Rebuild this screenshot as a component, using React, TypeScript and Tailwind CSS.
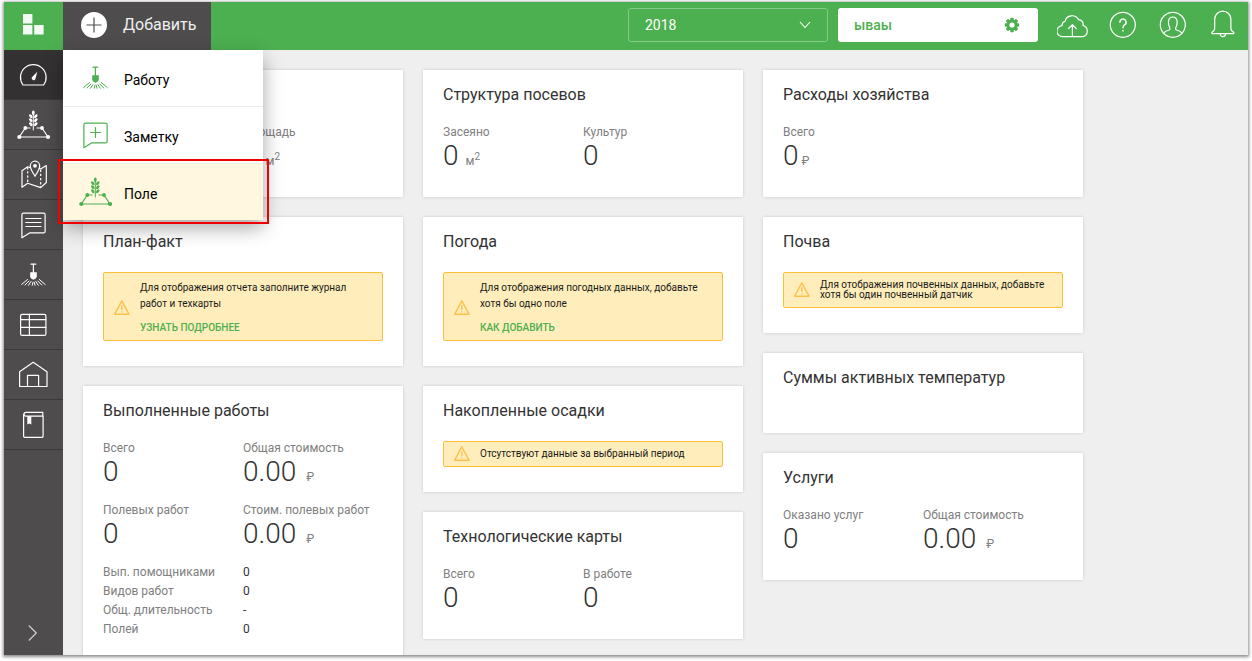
import type { ReactNode } from 'react';

function LineIcon({ children }: { children: ReactNode }) {
  return (
    <svg
      width="33"
      height="32"
      viewBox="0 0 33 32"
      fill="none"
      stroke="currentColor"
      strokeWidth="1.2"
      strokeLinejoin="round"
      strokeLinecap="round"
      className="shrink-0"
      aria-hidden="true"
    >
      {children}
    </svg>
  );
}

const GaugeIcon = () => (
  <LineIcon>
    <path d="M6 26A12.8 12.8 0 1 1 26.6 26Z" />
    <path d="M20.3 12.7L18.3 20.2A2 2 0 0 1 14.7 18.6Z" fill="currentColor" stroke="none" />
  </LineIcon>
);

const FieldIcon = () => (
  <LineIcon>
    <path d="M13 19H8.3L2.3 28H31L25 19H20" />
    <path d="M16.3 6V21" strokeWidth="1" />
    <g fill="currentColor" stroke="none">
      <circle cx="2.3" cy="28" r="2.1" />
      <circle cx="31" cy="28" r="2.1" />
      <circle cx="8.3" cy="19" r="1.9" />
      <circle cx="25" cy="19" r="1.9" />
      <ellipse cx="16.3" cy="3.8" rx="1.4" ry="2.4" />
      <ellipse cx="13.8" cy="7.2" rx="1.3" ry="2.3" transform="rotate(-40 13.8 7.2)" />
      <ellipse cx="18.8" cy="7.2" rx="1.3" ry="2.3" transform="rotate(40 18.8 7.2)" />
      <ellipse cx="13.8" cy="11.2" rx="1.3" ry="2.3" transform="rotate(-40 13.8 11.2)" />
      <ellipse cx="18.8" cy="11.2" rx="1.3" ry="2.3" transform="rotate(40 18.8 11.2)" />
      <ellipse cx="13.8" cy="15.2" rx="1.3" ry="2.3" transform="rotate(-40 13.8 15.2)" />
      <ellipse cx="18.8" cy="15.2" rx="1.3" ry="2.3" transform="rotate(40 18.8 15.2)" />
    </g>
  </LineIcon>
);

const MapIcon = () => (
  <LineIcon>
    <path d="M13.3 8.8L10.7 7.8L5 11.7V28.3L10.7 24.3L23.7 28.6L29.3 23.5V6.6L23.7 10L22.3 9.5" />
    <path d="M10.7 8V24M23.7 10.5V28" strokeDasharray="2.4 1.8" strokeLinecap="butt" />
    <path d="M18 17.3C16 13.6 13.3 10.4 13.3 6.9A4.7 4.7 0 0 1 22.7 6.9C22.7 10.4 20 13.6 18 17.3Z" />
    <circle cx="18" cy="6.8" r="1.9" fill="currentColor" stroke="none" />
  </LineIcon>
);

const bubble =
  'M6.4 4.2H26.6A1.5 1.5 0 0 1 28.1 5.7V22.4A1.5 1.5 0 0 1 26.6 23.9H12.5L4.9 28.7V5.7A1.5 1.5 0 0 1 6.4 4.2Z';

const ChatIcon = () => (
  <LineIcon>
    <path d={bubble} />
    <path d="M8.8 9.5H24M8.8 13.5H24M8.8 17.5H24" />
  </LineIcon>
);

const NoteIcon = () => (
  <LineIcon>
    <path d={bubble} />
    <path d="M16.5 8.5V18.5M11.5 13.5H21.5" />
  </LineIcon>
);

const ShovelIcon = () => (
  <LineIcon>
    <path d="M14 5.2H18.8M16.4 5.2V14" />
    <path d="M13.2 13.2H19.8V17.7Q19.4 19.8 16.4 20.8Q13.4 19.8 13.2 17.7Z" fill="currentColor" stroke="none" />
    <path
      d="M10.5 20.5L4.6 25.5M12 22L8 26M14 22.5L11.5 26.3M16 23.2L15.2 26.3M22.3 20.5L28.2 25.5M20.8 22L24.8 26M18.8 22.5L21.3 26.3M17.2 23.2L18 26.3"
      strokeWidth="1"
    />
  </LineIcon>
);

const TableIcon = () => (
  <LineIcon>
    <rect x="3.6" y="5.4" width="25.3" height="21" rx="1.5" />
    <path d="M3.6 10.6H28.9M3.6 18.4H28.9M12.4 5.4V26.4" />
  </LineIcon>
);

const HouseIcon = () => (
  <LineIcon>
    <path d="M2.6 12.8L16.2 3.3L30 12.8V27.5H2.6ZM10.5 27.5V16.3H21.6V27.5" />
  </LineIcon>
);

const BookIcon = () => (
  <LineIcon>
    <path d="M25.8 3.3H8.6A2 2 0 0 0 8.6 7.2H26.1V27A1.4 1.4 0 0 1 24.7 28.4H8A1.4 1.4 0 0 1 6.6 27V5.2M25.8 3.3V7" />
    <path d="M10.3 7.2H14.3V15.4L12.3 14.4L10.3 15.4Z" fill="currentColor" stroke="none" />
  </LineIcon>
);

function TopIcon({ label, children }: { label: string; children: ReactNode }) {
  return (
    <button type="button" aria-label={label} className="text-white">
      <svg
        width="32"
        height="32"
        viewBox="0 0 32 32"
        fill="none"
        stroke="currentColor"
        strokeWidth="1.2"
        strokeLinecap="round"
        strokeLinejoin="round"
        aria-hidden="true"
      >
        {children}
      </svg>
    </button>
  );
}

const navItems = [
  { label: 'Обзор', icon: <GaugeIcon />, active: true },
  { label: 'Поля', icon: <FieldIcon /> },
  { label: 'Карта', icon: <MapIcon /> },
  { label: 'Заметки', icon: <ChatIcon /> },
  { label: 'Работы', icon: <ShovelIcon /> },
  { label: 'Таблицы', icon: <TableIcon /> },
  { label: 'Хозяйство', icon: <HouseIcon /> },
  { label: 'Справочник', icon: <BookIcon /> },
];

const workDetails = [
  ['Вып. помощниками', '0'],
  ['Видов работ', '0'],
  ['Общ. длительность', '-'],
  ['Полей', '0'],
];

function Card({ title, children }: { title?: string; children?: ReactNode }) {
  return (
    <section className="bg-white px-5 pt-[15px] pb-[25px] shadow-[0_0_3px_rgba(0,0,0,0.16)]">
      <h2 className="mb-5 min-h-5 text-base leading-5 text-[#333]">{title}</h2>
      {children}
    </section>
  );
}

function Stats({ children }: { children: ReactNode }) {
  return <dl className="grid grid-cols-2 gap-y-[15px]">{children}</dl>;
}

function Stat({ label, value, unit }: { label: string; value: string; unit?: ReactNode }) {
  return (
    <div className="col-span-1 whitespace-nowrap last:-col-end-1 first:last:col-end-auto">
      <dt className="text-xs leading-[14px] text-[#808080]">{label}</dt>
      <dd className="flex items-baseline text-[28px] leading-[33px] font-light text-[#333]">
        {value}
        {unit}
      </dd>
    </div>
  );
}

const SquareMeters = () => (
  <span className="ml-[7px] text-xs leading-4 font-normal text-[#808080]">
    м<sup className="text-[10px]">2</sup>
  </span>
);

const Ruble = ({ tight }: { tight?: boolean }) => (
  <span className={`${tight ? 'ml-[3px]' : 'ml-[10px]'} text-xs leading-4 font-normal text-[#808080]`}>₽</span>
);

function Notice({ className, children }: { className: string; children: ReactNode }) {
  return (
    <div
      className={`flex items-center rounded-[2px] border border-[#fdbf37] bg-[#ffeebb] pl-[10px] text-[10px] text-[#1a1a1a] ${className}`}
    >
      <svg
        width="16"
        height="16"
        viewBox="0 0 16 16"
        fill="none"
        stroke="#fdc14a"
        strokeWidth="1.4"
        strokeLinejoin="round"
        className="mr-[10px] shrink-0"
        aria-hidden="true"
      >
        <path d="M7.8 .8L15 14.2H.7Z" />
        <path d="M7.8 5.2V10M7.8 11.2V12.6" />
      </svg>
      <div>{children}</div>
    </div>
  );
}

const AlertLink = ({ children }: { children: ReactNode }) => (
  <a href="#help" className="mt-2 block font-medium text-[#4caf50] uppercase">
    {children}
  </a>
);

function MenuItem({ icon, label, selected }: { icon: ReactNode; label: string; selected?: boolean }) {
  return (
    <li className="border-b border-[#ececec] last:border-b-0">
      <button
        type="button"
        className={`flex h-14 w-full items-center gap-3 pl-4 text-sm text-black ${selected ? 'bg-[#fff7df]' : 'bg-white'}`}
      >
        <span className="text-[#4caf50]">{icon}</span>
        <span className="pt-1">{label}</span>
      </button>
    </li>
  );
}

export default function App() {
  return (
    <div className="h-screen bg-white px-1 pt-[2px] pb-[6px] font-[Roboto,'Liberation_Sans',sans-serif]">
      <div className="flex h-full flex-col bg-[#efefef] shadow-[0_1px_3px_1px_rgba(0,0,0,0.45)]">
        <header className="relative z-10 flex h-12 shrink-0 items-stretch bg-[#4caf50]">
          <a href="#home" aria-label="На главную" className="flex w-[59px] shrink-0 items-center justify-center">
            <svg width="21" height="21" viewBox="0 0 21 21" fill="#f3faf3" className="mb-1" aria-hidden="true">
              <path d="M0 0H9.4V9.6H0ZM0 11H9.4V20.6H0ZM11.2 11H20.6V20.6H11.2Z" />
            </svg>
          </a>
          <div className="relative w-[148px] shrink-0">
            <button
              type="button"
              aria-expanded="true"
              className="flex h-full w-full items-center gap-4 bg-[#4f4c4d] pb-[2px] pl-[18px] text-base text-[#f0f0f0]"
            >
              <svg width="26" height="26" viewBox="0 0 26 26" aria-hidden="true">
                <circle cx="13" cy="13" r="13" fill="#fff" />
                <path d="M13 5.5V20.5M5.5 13H20.5" stroke="#4f4c4d" strokeWidth="1.2" />
              </svg>
              Добавить
            </button>
            <ul className="absolute top-full left-0 w-[200px] bg-white shadow-[0_8px_18px_rgba(0,0,0,0.35)]">
              <MenuItem icon={<ShovelIcon />} label="Работу" />
              <MenuItem icon={<NoteIcon />} label="Заметку" />
              <MenuItem icon={<FieldIcon />} label="Поле" selected />
            </ul>
            <div className="pointer-events-none absolute top-[157px] -left-[5px] h-[65px] w-[211px] border-2 border-[#f00000]" />
          </div>

          <div className="ml-auto flex items-center pr-[9px]">
            <div className="relative mr-[10px] mb-[2px]">
              <select
                aria-label="Год"
                className="h-[34px] w-[200px] appearance-none rounded-[3px] border border-[#85ca88] bg-transparent px-4 text-sm text-white"
              >
                <option>2018</option>
              </select>
              <svg
                width="12"
                height="8"
                viewBox="0 0 12 8"
                fill="none"
                stroke="#fff"
                strokeWidth="1.1"
                className="pointer-events-none absolute top-[13px] right-[17px]"
                aria-hidden="true"
              >
                <path d="M1 1L6 6.5L11 1" />
              </svg>
            </div>
            <button
              type="button"
              className="mr-[19px] mb-[2px] flex h-[34px] w-[200px] items-center justify-between rounded-[3px] bg-white pr-[18px] pl-4 text-sm font-medium text-[#4caf50]"
            >
              ываы
              <svg width="16" height="16" viewBox="-8 -8 16 16" aria-hidden="true">
                <g fill="#4caf50">
                  <rect x="-1.7" y="-7.2" width="3.4" height="14.4" rx="0.8" />
                  <rect x="-1.7" y="-7.2" width="3.4" height="14.4" rx="0.8" transform="rotate(45)" />
                  <rect x="-1.7" y="-7.2" width="3.4" height="14.4" rx="0.8" transform="rotate(90)" />
                  <rect x="-1.7" y="-7.2" width="3.4" height="14.4" rx="0.8" transform="rotate(135)" />
                  <circle r="5.4" />
                </g>
                <circle r="2.6" fill="#fff" />
              </svg>
            </button>
            <div className="flex items-center gap-[18px]">
              <TopIcon label="Загрузить">
                <path d="M5.8 26.6A5.3 5.3 0 0 1 4.9 15.6A5 5 0 0 1 8 11.3A7.3 7.3 0 0 1 21.5 9.6A4.8 4.8 0 0 1 26 15.5A5.7 5.7 0 0 1 25.7 26.6Z" />
                <path d="M15.4 26.3V14.8M11.6 18.5L15.4 14.6L19.2 18.5" />
              </TopIcon>
              <TopIcon label="Помощь">
                <circle cx="15.8" cy="14.8" r="12.5" />
                <path d="M12.9 12.2A3.1 3.1 0 1 1 17.4 14.9Q16 15.7 16 17.8M16 20.4V21" strokeWidth="1.4" />
              </TopIcon>
              <TopIcon label="Профиль">
                <circle cx="15.8" cy="14.8" r="12.5" />
                <path d="M6.8 23.4Q7.8 21.2 12.3 20Q13.6 19.2 12.6 17.1Q11.6 15.6 11.5 13.3V11.3Q11.9 7.1 15.8 7Q19.7 7.1 20.1 11.3V13.3Q20 15.6 19 17.1Q18 19.2 19.3 20Q23.8 21.2 24.8 23.4" />
              </TopIcon>
              <TopIcon label="Уведомления">
                <path d="M7.7 18.5V9.2A8.1 8.1 0 0 1 23.9 9.2V18.5Q24 21 26.8 22.2V23.6H4.9V22.2Q7.6 21 7.7 18.5Z" />
                <path d="M13.2 24A2.6 2.6 0 0 0 18.4 24" />
              </TopIcon>
            </div>
          </div>
        </header>

        <div className="flex min-h-0 flex-1">
          <nav className="flex w-[59px] shrink-0 flex-col bg-[#4f4c4d] text-white">
            {navItems.map((item) => (
              <a
                key={item.label}
                href="#section"
                aria-label={item.label}
                className={`flex h-[50px] shrink-0 items-center justify-center border-b border-[#3b393a] ${item.active ? 'bg-[#333132]' : ''}`}
              >
                {item.icon}
              </a>
            ))}
            <button type="button" aria-label="Развернуть" className="mt-auto mb-[13px] flex justify-center">
              <svg width="12" height="18" viewBox="0 0 12 18" fill="none" stroke="#d0d0d0" strokeWidth="1.2" aria-hidden="true">
                <path d="M.8 1.5L8.3 9L.8 16.5" />
              </svg>
            </button>
          </nav>

          <main className="flex min-w-0 flex-1 gap-5 overflow-hidden p-5">
            <div className="flex w-80 shrink-0 flex-col gap-5">
              <Card>
                <Stats>
                  <div />
                  <Stat label="Площадь" value="0" unit={<SquareMeters />} />
                </Stats>
              </Card>
              <Card title="План-факт">
                <Notice className="pt-[7px] pr-3 pb-1 leading-4">
                  Для отображения отчета заполните журнал работ и техкарты
                  <AlertLink>Узнать подробнее</AlertLink>
                </Notice>
              </Card>
              <Card title="Выполненные работы">
                <Stats>
                  <Stat label="Всего" value="0" />
                  <Stat label="Общая стоимость" value="0.00" unit={<Ruble />} />
                  <Stat label="Полевых работ" value="0" />
                  <Stat label="Стоим. полевых работ" value="0.00" unit={<Ruble />} />
                </Stats>
                <dl className="mt-[13px] text-xs leading-[19px]">
                  {workDetails.map(([name, value]) => (
                    <div key={name} className="grid grid-cols-2">
                      <dt className="text-[#808080]">{name}</dt>
                      <dd className="text-[#333]">{value}</dd>
                    </div>
                  ))}
                </dl>
              </Card>
            </div>

            <div className="flex w-80 shrink-0 flex-col gap-5">
              <Card title="Структура посевов">
                <Stats>
                  <Stat label="Засеяно" value="0" unit={<SquareMeters />} />
                  <Stat label="Культур" value="0" />
                </Stats>
              </Card>
              <Card title="Погода">
                <Notice className="pt-[7px] pr-3 pb-1 leading-4">
                  Для отображения погодных данных, добавьте хотя бы одно поле
                  <AlertLink>Как добавить</AlertLink>
                </Notice>
              </Card>
              <Card title="Накопленные осадки">
                <Notice className="py-1 leading-4">Отсутствуют данные за выбранный период</Notice>
              </Card>
              <Card title="Технологические карты">
                <Stats>
                  <Stat label="Всего" value="0" />
                  <Stat label="В работе" value="0" />
                </Stats>
              </Card>
            </div>

            <div className="flex w-80 shrink-0 flex-col gap-5">
              <Card title="Расходы хозяйства">
                <Stats>
                  <Stat label="Всего" value="0" unit={<Ruble tight />} />
                </Stats>
              </Card>
              <Card title="Почва">
                <Notice className="pt-[7px] pr-3 pb-[7px] leading-[10px]">
                  Для отображения почвенных данных, добавьте хотя бы один почвенный датчик
                </Notice>
              </Card>
              <Card title="Суммы активных температур" />
              <Card title="Услуги">
                <Stats>
                  <Stat label="Оказано услуг" value="0" />
                  <Stat label="Общая стоимость" value="0.00" unit={<Ruble />} />
                </Stats>
              </Card>
            </div>
          </main>
        </div>
      </div>
    </div>
  );
}
